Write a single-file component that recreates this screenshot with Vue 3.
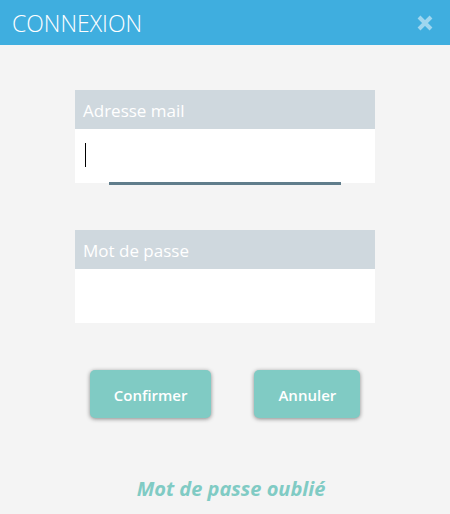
<script setup>
import { ref } from 'vue'

const email = ref('')
const password = ref('')
const active = ref('email')
</script>

<template>
  <main class="dialog">
    <header class="bar">
      <h1 class="title">CONNEXION</h1>
      <button class="close" type="button" aria-label="Fermer">
        <svg viewBox="0 0 16 16" width="16" height="16" aria-hidden="true">
          <path d="M2 2 L14 14 M14 2 L2 14" />
        </svg>
      </button>
    </header>

    <form class="form" @submit.prevent>
      <div class="field" :class="{ active: active === 'email' }">
        <label class="label" for="email">Adresse mail</label>
        <input id="email" v-model="email" class="input" type="email" @focus="active = 'email'" />
        <span v-if="active === 'email' && !email" class="caret"></span>
      </div>
      <div class="field" :class="{ active: active === 'password' }">
        <label class="label" for="password">Mot de passe</label>
        <input id="password" v-model="password" class="input" type="password" @focus="active = 'password'" />
      </div>
      <div class="actions">
        <button class="button" type="submit">Confirmer</button>
        <button class="button" type="button">Annuler</button>
      </div>
    </form>

    <a class="forgot" href="#">Mot de passe oublié</a>
  </main>
</template>

<style>
body {
  background: #f4f4f4;
}
</style>

<style scoped>
.dialog {
  display: flex;
  flex-direction: column;
  align-items: center;
  font-family: "Open Sans", "Noto Sans", sans-serif;
}

.bar {
  box-sizing: border-box;
  display: flex;
  align-items: center;
  justify-content: space-between;
  width: 100%;
  height: 45px;
  padding: 0 17px 0 12px;
  background: #3faedf;
}

.title {
  margin: 0;
  padding-top: 2px;
  color: #fff;
  font-size: 23px;
  font-weight: 300;
  line-height: 43px;
}

.close {
  display: flex;
  padding: 0;
  border: 0;
  background: none;
  cursor: pointer;
}

.close path {
  fill: none;
  stroke: #9fd6ef;
  stroke-width: 4;
}

.form {
  display: flex;
  flex-direction: column;
  gap: 47px;
  width: 66.667%;
  padding-top: 45px;
}

.field {
  position: relative;
  display: flex;
  flex-direction: column;
}

.label {
  padding: 2px 8px 0;
  background: #cfd8de;
  color: #fff;
  font-size: 17px;
  line-height: 37px;
}

.input {
  box-sizing: border-box;
  width: 100%;
  height: 54px;
  padding: 0 10px;
  border: 0;
  outline: 0;
  background: #fff;
  font: inherit;
  font-size: 17px;
}

.caret {
  position: absolute;
  left: 10px;
  bottom: 16px;
  width: 1px;
  height: 24px;
  background: #000;
  pointer-events: none;
}

.active::after {
  content: "";
  position: absolute;
  right: 34px;
  bottom: -2px;
  left: 34px;
  height: 3px;
  background: #607d8b;
}

.actions {
  display: flex;
  justify-content: center;
  gap: 43px;
}

.button {
  height: 48px;
  padding: 2px 24px 0;
  border: 0;
  border-radius: 5px;
  background: #80cbc4;
  box-shadow: 0 1px 4px rgba(0, 0, 0, 0.45);
  color: #fff;
  font: inherit;
  font-size: 15px;
  font-weight: 600;
  cursor: pointer;
}

.forgot {
  margin-top: 55px;
  padding-left: 12px;
  color: #80cbc4;
  font-size: 20px;
  font-style: italic;
  font-weight: 700;
  line-height: 32px;
  text-decoration: none;
}
</style>
